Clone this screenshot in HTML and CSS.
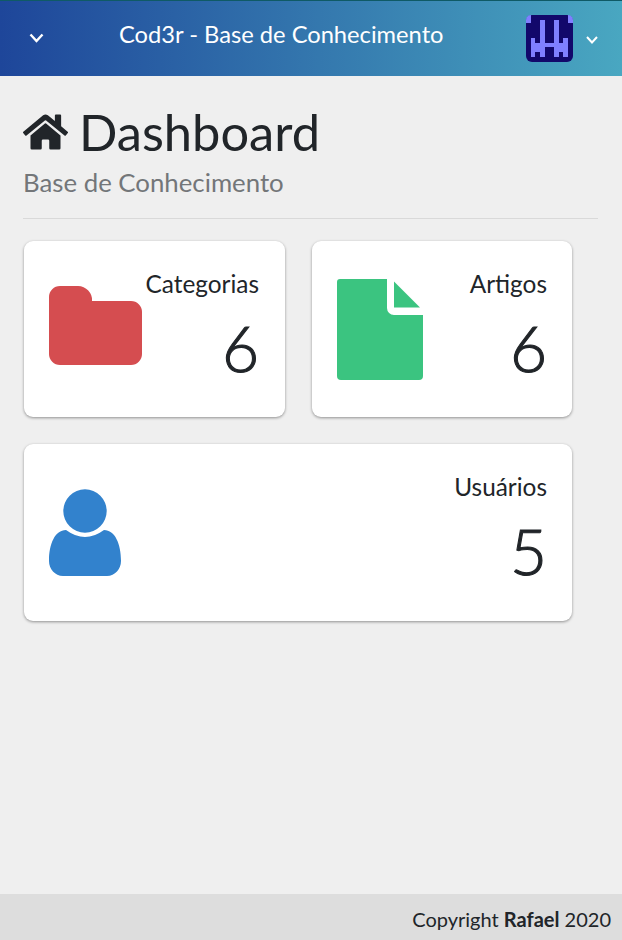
FILE: index.html
```html
<!DOCTYPE html>
<html lang="en">
<head>
    <meta charset="UTF-8">
    <meta name="viewport" content="width=device-width, initial-scale=1.0">
    <title>Cod3r - Base de Conhecimento</title>
    <link rel="stylesheet" href="styles.css">
</head>
<body>
    <div class="app">
        <header class="header">
            <a class="toggle" href="#">
                <svg class="chevron" width="15" height="10" viewBox="0 0 15 10"><path d="M1.5 1.5L7.5 8L13.5 1.5"/></svg>
            </a>
            <h1 class="title">Cod3r - Base de Conhecimento</h1>
            <div class="user-menu">
                <svg class="avatar" width="47" height="47" viewBox="0 0 47 47">
                    <rect width="47" height="47" rx="6" fill="#12086b"/>
                    <path fill="#7f7fff" d="M0 8V5a5 5 0 0 1 5-5v8zM42 0a5 5 0 0 1 5 5v3h-5zM5 23h4v5h5V5h5v23h9V5h5v23h4v-5h5v19h-5v-5h-4v5h-5V32h-9v10h-5v-5H9v5H5z"/>
                </svg>
                <svg class="chevron chevron-small" width="12" height="8" viewBox="0 0 12 8"><path d="M1 1L6 6.5L11 1"/></svg>
            </div>
        </header>

        <main class="content">
            <div class="page-title">
                <h2>
                    <svg class="home-icon" width="45" height="40" viewBox="0 0 576 512"><path d="M280.37 148.26L96 300.11V464a16 16 0 0 0 16 16l112.06-.29a16 16 0 0 0 15.92-16V368a16 16 0 0 1 16-16h64a16 16 0 0 1 16 16v95.64a16 16 0 0 0 16 16.05L464 480a16 16 0 0 0 16-16V300L295.67 148.26a12.19 12.19 0 0 0-15.3 0zM571.6 251.47L488 182.56V44.05a12 12 0 0 0-12-12h-56a12 12 0 0 0-12 12v72.61L318.47 43a48 48 0 0 0-61 0L4.34 251.47a12 12 0 0 0-1.6 16.9l25.5 31A12 12 0 0 0 45.15 301l235.22-193.74a12.19 12.19 0 0 1 15.3 0L530.9 301a12 12 0 0 0 16.9-1.6l25.5-31a12 12 0 0 0-1.7-16.93z"/></svg>
                    Dashboard
                </h2>
                <h3>Base de Conhecimento</h3>
                <hr>
            </div>

            <div class="stats">
                <div class="stat">
                    <svg class="stat-icon icon-folder" width="93" height="79" viewBox="0 0 93 79"><path fill="#d54d50" d="M11 0H29a14 14 0 0 1 14 15H82a11 11 0 0 1 11 11V68a11 11 0 0 1-11 11H11A11 11 0 0 1 0 68V11A11 11 0 0 1 11 0z"/></svg>
                    <div class="stat-info">
                        <span class="stat-title">Categorias</span>
                        <span class="stat-value">6</span>
                    </div>
                </div>
                <div class="stat">
                    <svg class="stat-icon icon-file" width="86" height="101" viewBox="0 0 86 101"><path fill="#3bc480" d="M3 0H50V29a7 7 0 0 0 7 7H86V97a4 4 0 0 1-4 4H4a4 4 0 0 1-4-4V3a3 3 0 0 1 3-3zM57 2.5L83 28.5H57z"/></svg>
                    <div class="stat-info">
                        <span class="stat-title">Artigos</span>
                        <span class="stat-value">6</span>
                    </div>
                </div>
                <div class="stat stat-wide">
                    <svg class="stat-icon" width="72" height="87" viewBox="0 0 72 87"><path fill="#3282cd" d="M36 0.3a21.7 21.7 0 1 1 0 43.4a21.7 21.7 0 0 1 0-43.4zM17 41Q36 55 55 41C66 41 72 55 72 72C72 80 66 87 58 87H14C6 87 0 80 0 72C0 55 6 41 17 41z"/></svg>
                    <div class="stat-info">
                        <span class="stat-title">Usuários</span>
                        <span class="stat-value">5</span>
                    </div>
                </div>
            </div>
        </main>

        <footer class="footer">
            <span>Copyright <strong>Rafael</strong> 2020</span>
        </footer>
    </div>
</body>
</html>
```

FILE: styles.css
```css
* { box-sizing: border-box; }
body { margin: 0; font-family: Lato, sans-serif; color: #212529; }
.app { display: flex; flex-direction: column; height: 940px; background: #efefef; }

.header { display: flex; align-items: center; height: 76px; background: linear-gradient(to right, #1e469a, #49a7c1); border-top: 1px solid #0f5a66; color: white; }
.toggle { display: flex; justify-content: center; width: 72px; margin-bottom: 2px; }
.chevron { fill: none; stroke: white; stroke-width: 2.4; }
.chevron-small { margin-top: 4px; stroke-width: 2; }
.title { flex-grow: 1; margin: 0 0 9px; padding-left: 47px; font-size: 23.7px; font-weight: 400; }
.user-menu { display: flex; align-items: center; gap: 13px; width: 96px; height: 47px; margin-bottom: 1px; }

.content { flex-grow: 1; padding: 23px 24px 0 23px; }
.page-title h2 { display: flex; align-items: center; gap: 11px; margin: 0; font-size: 50.6px; font-weight: 400; line-height: 66px; color: #212529; }
.page-title h3 { margin: 2px 0 0; font-size: 25.8px; font-weight: 400; line-height: 30px; color: #737679; }
.page-title hr { margin: 21px 0 22px; border: 0; border-top: 1px solid #d9d9d9; }
.home-icon { fill: #212529; }

.stats { display: grid; grid-template-columns: 261px 260px; grid-template-rows: 176px 177px; gap: 27px; margin-left: 1px; }
.stat { display: flex; padding: 24px 26px 24px 25px; background: white; border-radius: 9px; box-shadow: 0 1px 3px rgba(0, 0, 0, .4); }
.stat-wide { grid-column: span 2; padding-right: 25px; }
.stat + .stat { padding-right: 25px; }
.stat-icon { flex-shrink: 0; align-self: center; }
.icon-folder { margin-bottom: 7px; }
.icon-file { margin-top: 1px; }
.stat-info { display: flex; flex-direction: column; align-items: flex-end; flex-grow: 1; }
.stat-title { font-size: 24.4px; line-height: 38px; }
.stat-value { font-size: 64px; line-height: 90px; font-weight: 300; -webkit-text-stroke: 1.1px #212529; }

.footer { display: flex; justify-content: flex-end; align-items: center; height: 46px; padding: 4px 11px 0 0; background: #ddd; font-size: 20px; }
```
